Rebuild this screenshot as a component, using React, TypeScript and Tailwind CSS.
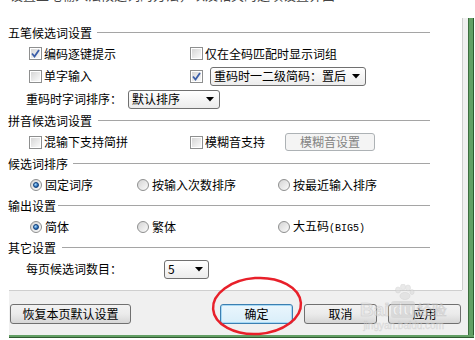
import React from 'react';

const font = "[font-family:'Noto_Sans_CJK_SC','Noto_Sans',sans-serif]";

const Check: React.FC<{ checked?: boolean }> = ({ checked }) => (
  <span className="w-[13px] h-[13px] shrink-0 border border-[#8e8f8f] bg-white p-px flex">
    <span className="flex-1 bg-gradient-to-br from-[#d6d6d6] to-[#fafafa] flex items-center justify-center">
      {checked && (
        <svg width="9" height="9" viewBox="0 0 9 9">
          <path d="M1 4.5 L3.5 7.5 L8 1" stroke="#3b5ea8" strokeWidth="1.8" fill="none" />
        </svg>
      )}
    </span>
  </span>
);

const Radio: React.FC<{ checked?: boolean }> = ({ checked }) => (
  <span className="w-[12px] h-[12px] shrink-0 rounded-full border border-[#8e8f8f] bg-gradient-to-br from-[#d4d4d4] to-[#fbfbfb] flex items-center justify-center">
    {checked && (
      <span className="w-[6px] h-[6px] rounded-full bg-[radial-gradient(circle_at_35%_35%,#a8dcff,#1c5fae_70%)] border border-[#0f3f7a]" />
    )}
  </span>
);

const Select: React.FC<{ label: string; w: string }> = ({ label, w }) => (
  <div className={`${w} h-[19px] border border-[#707070] rounded-[3px] bg-gradient-to-b from-white to-[#ececec] flex items-center pl-[3px] pr-[5px]`}>
    <span className="flex-1 text-[12px] leading-none">{label}</span>
    <svg width="8" height="5" viewBox="0 0 8 5">
      <path d="M0 0 H8 L4 4.5 Z" fill="#000" />
    </svg>
  </div>
);

const Section: React.FC<{ title: string; gap: string }> = ({ title, gap }) => (
  <div className="flex items-center h-[21px] pl-[8px] w-[430px]">
    <span className="text-[12px] leading-none">{title}</span>
    <div className={`flex-1 h-px bg-[#a5a5a5] ${gap}`} />
  </div>
);

const Button: React.FC<{ label: string; w: string; focused?: boolean }> = ({ label, w, focused }) => (
  <div
    className={`${w} h-[20px] rounded-[3px] border flex items-center justify-center text-[12px] leading-none ${
      focused
        ? 'border-[#3c7fb1] bg-gradient-to-b from-[#eaf6fd] to-[#d9eef9] shadow-[inset_0_0_0_1px_#a7d9f5]'
        : 'border-[#707070] bg-gradient-to-b from-[#f2f2f2] via-[#ebebeb] to-[#d6d6d6]'
    }`}
  >
    {label}
  </div>
);

export default function App() {
  return (
    <div className={`w-[475px] h-[340px] bg-white overflow-hidden relative text-black ${font}`}>
      <div className="flex h-[335px]">
        {/* left: tab page + button bar */}
        <div className="w-[462px] flex flex-col">
          <div className="h-[290px] flex flex-col">
            <div className="h-[3px] overflow-hidden pl-[10px]">
              <div className="-mt-[12px] text-[13px] text-[#444] leading-[14px]">设置五笔输入法候选词的方法，以及相关的选项设置界面</div>
            </div>
            <div className="h-[19px]" />

            <Section title="五笔候选词设置" gap="ml-[5px]" />
            <div className="flex items-center h-[21px]">
              <div className="w-[190px] pl-[29px] flex items-center gap-[2px]">
                <Check checked />
                <span className="text-[12px] leading-none">编码逐键提示</span>
              </div>
              <div className="flex items-center gap-[2px]">
                <Check />
                <span className="text-[12px] leading-none">仅在全码匹配时显示词组</span>
              </div>
            </div>
            <div className="flex items-center h-[24px]">
              <div className="w-[190px] pl-[29px] flex items-center gap-[2px]">
                <Check />
                <span className="text-[12px] leading-none">单字输入</span>
              </div>
              <div className="flex items-center gap-[7px]">
                <Check checked />
                <Select label="重码时一二级简码：置后" w="w-[156px]" />
              </div>
            </div>
            <div className="flex items-center h-[22px] pl-[26px]">
              <span className="w-[102px] text-[12px] leading-none">重码时字词排序：</span>
              <Select label="默认排序" w="w-[92px]" />
            </div>

            <Section title="拼音候选词设置" gap="ml-[6px]" />
            <div className="flex items-center h-[22px]">
              <div className="w-[190px] pl-[29px] flex items-center gap-[2px]">
                <Check />
                <span className="text-[12px] leading-none">混输下支持简拼</span>
              </div>
              <div className="w-[95px] flex items-center gap-[2px]">
                <Check />
                <span className="text-[12px] leading-none">模糊音支持</span>
              </div>
              <div className="w-[90px] h-[18px] rounded-[3px] border border-[#adb2b5] bg-[#f4f4f4] flex items-center justify-center text-[12px] leading-none text-[#838383]">
                模糊音设置
              </div>
            </div>

            <Section title="候选词排序" gap="ml-[5px]" />
            <div className="flex items-center h-[21px] pl-[30px]">
              <div className="w-[107px] flex items-center gap-[3px]">
                <Radio checked />
                <span className="text-[12px] leading-none">固定词序</span>
              </div>
              <div className="w-[141px] flex items-center gap-[3px]">
                <Radio />
                <span className="text-[12px] leading-none">按输入次数排序</span>
              </div>
              <div className="flex items-center gap-[3px]">
                <Radio />
                <span className="text-[12px] leading-none">按最近输入排序</span>
              </div>
            </div>

            <Section title="输出设置" gap="ml-[2px]" />
            <div className="flex items-center h-[21px] pl-[30px]">
              <div className="w-[107px] flex items-center gap-[3px]">
                <Radio checked />
                <span className="text-[12px] leading-none">简体</span>
              </div>
              <div className="w-[141px] flex items-center gap-[3px]">
                <Radio />
                <span className="text-[12px] leading-none">繁体</span>
              </div>
              <div className="flex items-center gap-[3px]">
                <Radio />
                <span className="text-[12px] leading-none">
                  大五码<span className="text-[10px] font-['Liberation_Mono',monospace]">(BIG5)</span>
                </span>
              </div>
            </div>

            <Section title="其它设置" gap="ml-[6px]" />
            <div className="flex items-center h-[22px] pl-[26px]">
              <span className="w-[138px] text-[12px] leading-none">每页候选词数目：</span>
              <Select label="5" w="w-[45px]" />
            </div>
          </div>

          {/* button bar */}
          <div className="ml-[9px] flex-1 bg-[#f0f0f0] border-t border-[#cfcfcf] flex items-start pt-[13px] pl-px pr-px">
            <Button label="恢复本页默认设置" w="w-[121px]" />
            <div className="flex-1" />
            <div className="flex gap-[11px]">
              <Button label="确定" w="w-[73px]" focused />
              <Button label="取消" w="w-[73px]" />
              <Button label="应用" w="w-[73px]" />
            </div>
          </div>
        </div>

        {/* right gray strip */}
        <div className="w-[6px] flex flex-col">
          <div className="h-[18px] bg-white" />
          <div className="h-[272px] bg-[#f0f0f0] border-l border-[#cfcfcf]" />
          <div className="flex-1 bg-[#f0f0f0]" />
        </div>

        {/* green window frame */}
        <div className="w-[6px] flex flex-col">
          <div className="h-[18px] bg-white" />
          <div className="flex-1 bg-[#63a065] border-l border-[#3d6e3f] border-r border-r-[#2f5a31]" />
        </div>
      </div>
      <div className="ml-[9px] w-[465px] h-[3px] bg-[#63a065] border-b border-[#2f5a31]" />

      {/* watermark */}
      <div className="absolute left-[360px] top-[284px] opacity-60 pointer-events-none flex flex-col items-center">
        <svg width="22" height="16" viewBox="0 0 22 16">
          <g fill="#dcdcdc" stroke="#c4c4c4" strokeWidth="0.6">
            <ellipse cx="5" cy="6" rx="2.5" ry="3" />
            <ellipse cx="10" cy="3" rx="2.5" ry="3" />
            <ellipse cx="15" cy="4" rx="2.5" ry="3" />
            <ellipse cx="19" cy="8" rx="2" ry="2.5" />
            <ellipse cx="12" cy="12" rx="5" ry="3.5" />
          </g>
        </svg>
        <div className="flex items-center text-[19px] font-bold leading-none text-[#e4e4e4] [font-family:'Liberation_Sans',sans-serif] [-webkit-text-stroke:0.6px_#bdbdbd]">
          Bai
          <span className="ml-px px-[2px] rounded-[3px] bg-[#d0d0d0] text-[#f4f4f4] text-[17px]">du</span>
          <span className="ml-[2px] text-[15px] font-normal">经验</span>
        </div>
        <div className="mt-[2px] text-[10px] leading-none text-[#d8d8d8] [font-family:'Liberation_Sans',sans-serif] [-webkit-text-stroke:0.3px_#c4c4c4]">
          jingyan.baidu.com
        </div>
      </div>

      {/* red ellipse annotation */}
      <svg className="absolute left-[210px] top-[275px] pointer-events-none" width="96" height="64" viewBox="0 0 96 64">
        <ellipse cx="47" cy="31" rx="44" ry="28" transform="rotate(-4 47 31)" fill="none" stroke="#e8202a" strokeWidth="2.5" />
      </svg>
    </div>
  );
}
